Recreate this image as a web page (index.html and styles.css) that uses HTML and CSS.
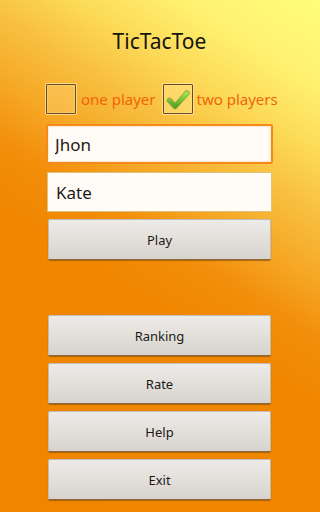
FILE: index.html
```html
<!DOCTYPE html>
<html>
<head>
<meta charset="utf-8">
<link rel="stylesheet" href="styles.css">
</head>
<body>
<div class="screen">
  <div class="title">TicTacToe</div>
  <div class="options">
    <span class="box"></span>
    <span class="label">one player</span>
    <span class="box box-checked">
      <svg class="check" viewBox="0 0 28 28" width="28" height="28">
        <defs>
          <linearGradient id="g" x1="0" y1="0" x2="0" y2="1">
            <stop offset="0" stop-color="#9be650"/>
            <stop offset="1" stop-color="#4fa61e"/>
          </linearGradient>
        </defs>
        <path d="M5.5 15.5 L11 21.5 L23 8" fill="none" stroke="#3d7a18" stroke-width="5.5" stroke-linecap="round" stroke-linejoin="round" opacity="0.55"/>
        <path d="M5.5 15.5 L11 21.5 L23 8" fill="none" stroke="url(#g)" stroke-width="3.8" stroke-linecap="round" stroke-linejoin="round"/>
      </svg>
    </span>
    <span class="label label-2">two players</span>
  </div>
  <input class="field field-focus" type="text" value="Jhon">
  <input class="field field-plain" type="text" value="Kate">
  <div class="btn btn-play">Play</div>
  <div class="btn btn-first">Ranking</div>
  <div class="btn">Rate</div>
  <div class="btn">Help</div>
  <div class="btn">Exit</div>
</div>
</body>
</html>
```

FILE: styles.css
```css
html, body {
  margin: 0;
  padding: 0;
}

body {
  width: 319px;
  height: 512px;
  overflow: hidden;
  font-family: "Noto Sans", "Open Sans", "DejaVu Sans", sans-serif;
  background: linear-gradient(212deg,
    #fffd7a 0%,
    #fff270 12%,
    #fcd957 22%,
    #f8c040 30%,
    #f5a624 40%,
    #f28e0a 48%,
    #f18600 58%,
    #f18500 100%);
}

.screen {
  width: 227px;
  margin: 0 auto;
  padding-top: 29px;
  display: flex;
  flex-direction: column;
}

.title {
  font-size: 21px;
  line-height: 24px;
  text-align: center;
  color: #161310;
  margin-bottom: 31px;
}

.options {
  display: flex;
  align-items: center;
  height: 30px;
  white-space: nowrap;
}

.box {
  flex: none;
  width: 28px;
  height: 28px;
  border: 1px solid #6a4a1e;
  border-radius: 1px;
  background: rgba(255, 214, 130, 0.35);
  box-shadow: 0 0 0 1px rgba(255, 232, 170, 0.75), inset 0 0 0 1px rgba(255, 225, 160, 0.35);
  position: relative;
}

.box-checked {
  margin-left: 7px;
  background: rgba(255, 230, 140, 0.45);
}

.check {
  display: block;
}

.label {
  font-size: 15px;
  line-height: 20px;
  color: #f2640c;
  margin-left: 5px;
}

.label-2 {
  margin-left: 4px;
}

.field {
  display: block;
  box-sizing: border-box;
  height: 40px;
  font-family: inherit;
  font-size: 17px;
  color: #1e1a16;
  background: #fffbf6;
  outline: none;
  margin: 0;
}

.field-focus {
  width: 227px;
  margin-top: 10px;
  border: 2px solid #f7891a;
  border-radius: 2px;
  padding: 0 0 0 7px;
  box-shadow: inset 0 0 2px rgba(240, 150, 60, 0.5);
}

.field-plain {
  width: 225px;
  margin: 8px 1px 0;
  border: 1px solid #e2c27a;
  padding: 0 0 0 8px;
}

.btn {
  box-sizing: border-box;
  height: 41px;
  margin: 7px 2px 0;
  display: flex;
  align-items: center;
  justify-content: center;
  font-size: 13px;
  color: #1c1a18;
  background: linear-gradient(#ecebe7, #e3e0dc 50%, #d7d3ce);
  border: 1px solid #c3bcb2;
  border-bottom-color: #8c6a3c;
  border-radius: 2px;
  box-shadow: 0 1px 1px rgba(120, 60, 0, 0.55);
}

.btn-first {
  margin-top: 55px;
}
```
